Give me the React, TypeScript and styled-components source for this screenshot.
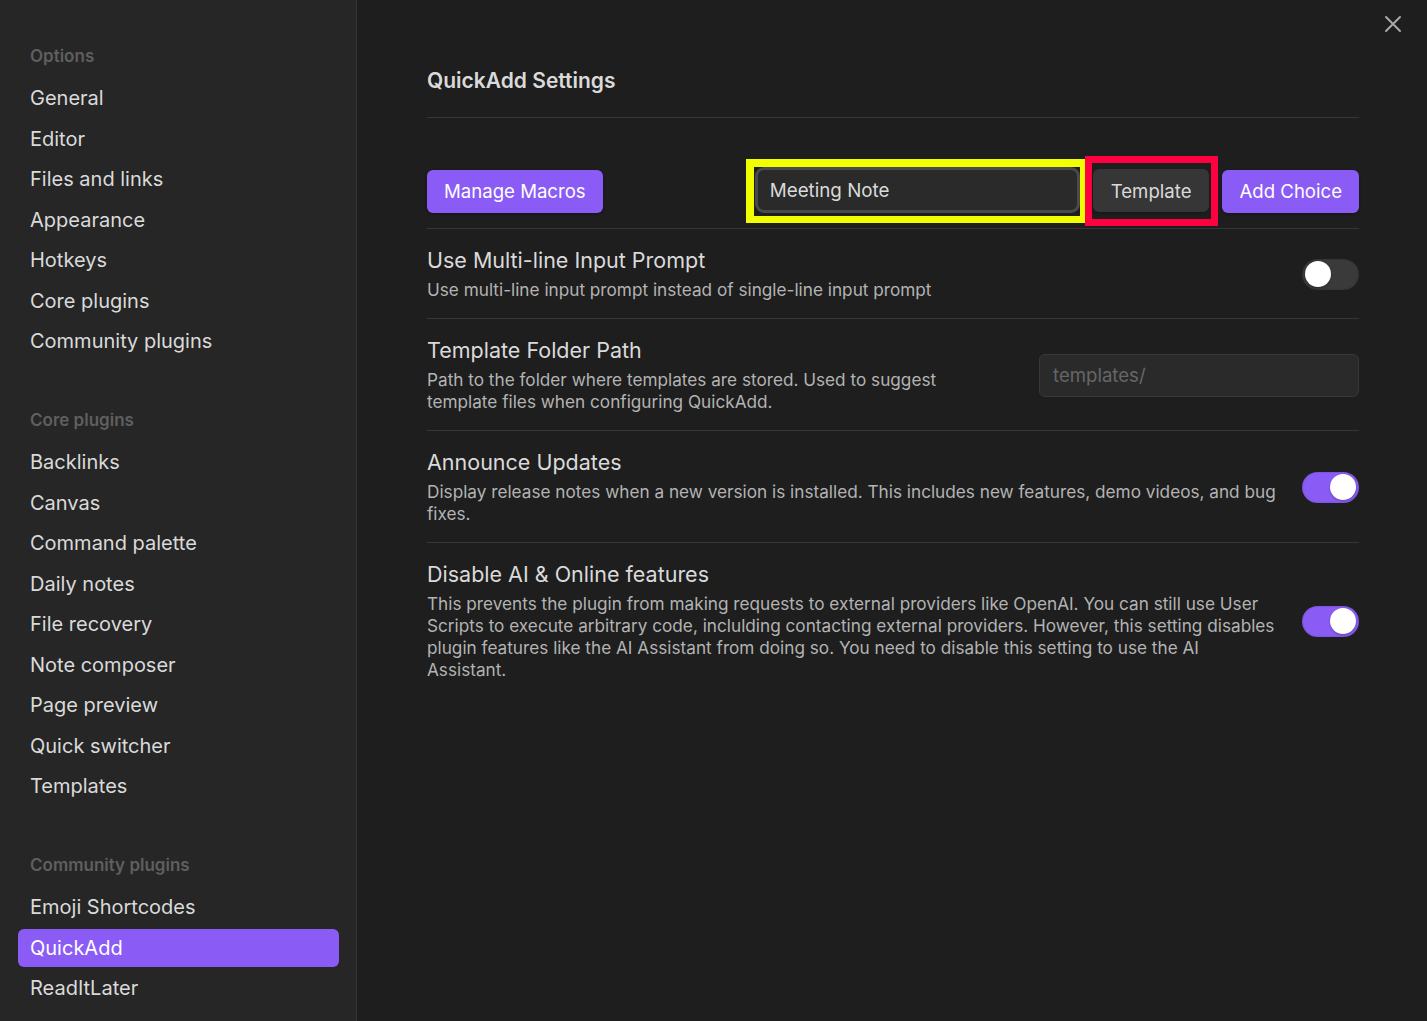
import React from "react";
import styled, { createGlobalStyle } from "styled-components";

const GlobalStyle = createGlobalStyle`
  html, body { margin: 0; padding: 0; background: #1e1e1e; }
  body { font-family: Inter, "Noto Sans", sans-serif; -webkit-font-smoothing: antialiased; }
  * { box-sizing: border-box; }
`;

const Window = styled.div`
  display: flex;
  width: 1427px;
  height: 1021px;
  position: relative;
  overflow: hidden;
  background: #1e1e1e;
`;

const Sidebar = styled.nav`
  width: 357px;
  flex: 0 0 357px;
  background: #262626;
  border-right: 1px solid #363636;
  padding: 45px 17px 0 18px;
  display: flex;
  flex-direction: column;
  gap: 49px;
`;

const NavGroup = styled.div`
  display: flex;
  flex-direction: column;
`;

const NavHeading = styled.div`
  font-size: 17px;
  line-height: 22px;
  font-weight: 600;
  color: #5f5f5f;
  padding-left: 12px;
  margin-bottom: 12px;
`;

const NavList = styled.div`
  display: flex;
  flex-direction: column;
  gap: 2.5px;
`;

const NavItem = styled.div<{ $active?: boolean }>`
  height: 38px;
  display: flex;
  align-items: center;
  padding-left: 12px;
  border-radius: 6px;
  font-size: 20px;
  color: ${(p) => (p.$active ? "#ffffff" : "#dadada")};
  background: ${(p) => (p.$active ? "#8a5cf5" : "transparent")};
`;

const Main = styled.main`
  flex: 1;
  padding: 67px 68px 0 70px;
  display: flex;
  flex-direction: column;
`;

const Title = styled.h2`
  margin: 0;
  font-size: 21px;
  line-height: 28px;
  font-weight: 600;
  color: #dadada;
  padding-bottom: 22px;
  border-bottom: 1px solid #363636;
`;

const ButtonRow = styled.div`
  display: flex;
  align-items: center;
  justify-content: space-between;
  padding: 38px 0 2px;
  border-bottom: 1px solid #363636;
`;

const RightGroup = styled.div`
  display: flex;
  align-items: center;
`;

const Button = styled.button<{ $variant?: "accent" | "plain" }>`
  height: 43px;
  padding: 0 ${(p) => (p.$variant === "plain" ? "18px" : "17px")};
  border: none;
  border-radius: 6px;
  font-family: Inter, "Noto Sans", sans-serif;
  font-size: 18.6px;
  color: ${(p) => (p.$variant === "plain" ? "#dadada" : "#ffffff")};
  background: ${(p) => (p.$variant === "plain" ? "#363636" : "#8a5cf5")};
  box-shadow: 0 1px 3px rgba(0, 0, 0, 0.35);
  cursor: pointer;
`;

const YellowMark = styled.div`
  border-style: solid;
  border-color: #f2ff00;
  border-width: 8px 5px 7px 8px;
  padding: 0 0 3px 1px;
  display: flex;
`;

const RedMark = styled.div`
  border: 7px solid #ff0040;
  padding: 6px 2px 7px 1px;
  margin-right: 4px;
  display: flex;
`;

const NameInput = styled.div`
  width: 325px;
  height: 46px;
  border: 3px solid #4a4a4a;
  border-radius: 9px;
  background: #2a2a2a;
  display: flex;
  align-items: center;
  padding-left: 12px;
  font-size: 18.8px;
  color: #dadada;
`;

const SettingItem = styled.div<{ $last?: boolean }>`
  display: flex;
  align-items: center;
  gap: 24px;
  padding: 18px 0 17px;
  border-bottom: ${(p) => (p.$last ? "none" : "1px solid #363636")};
`;

const Info = styled.div`
  flex: 1 1 auto;
  display: flex;
  flex-direction: column;
  gap: 6px;
`;

const Name = styled.div`
  font-size: 21.5px;
  line-height: 26px;
  color: #dadada;
`;

const Desc = styled.div`
  font-size: 17.2px;
  line-height: 22px;
  color: #b3b3b3;
`;

const Control = styled.div<{ $wide?: boolean }>`
  flex: 0 0 ${(p) => (p.$wide ? "360px" : "auto")};
  display: flex;
  justify-content: flex-end;
  align-items: center;
`;

const TextField = styled.div`
  width: 320px;
  height: 43px;
  border: 1px solid #383838;
  border-radius: 6px;
  background: #2a2a2a;
  display: flex;
  align-items: center;
  padding-left: 13px;
  font-size: 18.6px;
  color: #666666;
`;

const ToggleTrack = styled.div<{ $on?: boolean }>`
  width: 57px;
  height: 31px;
  border-radius: 16px;
  background: ${(p) => (p.$on ? "#8a5cf5" : "#3a3a3a")};
  display: flex;
  align-items: center;
  justify-content: ${(p) => (p.$on ? "flex-end" : "flex-start")};
  padding: 0 3px;
  box-shadow: inset 0 0 2px rgba(0, 0, 0, 0.3);
`;

const ToggleKnob = styled.div`
  width: 26px;
  height: 26px;
  border-radius: 50%;
  background: #ffffff;
  box-shadow: 0 1px 2px rgba(0, 0, 0, 0.3);
`;

const CloseButton = styled.div`
  position: absolute;
  top: 14px;
  right: 24px;
  width: 20px;
  height: 20px;
  display: flex;
  align-items: center;
  justify-content: center;
  color: #a8a8a8;
`;

const Toggle = ({ on }: { on?: boolean }) => (
  <Control>
    <ToggleTrack $on={on}>
      <ToggleKnob />
    </ToggleTrack>
  </Control>
);

const groups: { title: string; items: string[] }[] = [
  {
    title: "Options",
    items: ["General", "Editor", "Files and links", "Appearance", "Hotkeys", "Core plugins", "Community plugins"],
  },
  {
    title: "Core plugins",
    items: [
      "Backlinks",
      "Canvas",
      "Command palette",
      "Daily notes",
      "File recovery",
      "Note composer",
      "Page preview",
      "Quick switcher",
      "Templates",
    ],
  },
  {
    title: "Community plugins",
    items: ["Emoji Shortcodes", "QuickAdd", "ReadItLater"],
  },
];

export default function App() {
  return (
    <>
      <GlobalStyle />
      <Window>
        <Sidebar>
          {groups.map((g) => (
            <NavGroup key={g.title}>
              <NavHeading>{g.title}</NavHeading>
              <NavList>
                {g.items.map((it) => (
                  <NavItem key={it} $active={g.title === "Community plugins" && it === "QuickAdd"}>
                    {it}
                  </NavItem>
                ))}
              </NavList>
            </NavGroup>
          ))}
        </Sidebar>
        <Main>
          <Title>QuickAdd Settings</Title>
          <ButtonRow>
            <Button>Manage Macros</Button>
            <RightGroup>
              <YellowMark>
                <NameInput>Meeting Note</NameInput>
              </YellowMark>
              <RedMark>
                <Button $variant="plain">Template</Button>
              </RedMark>
              <Button>Add Choice</Button>
            </RightGroup>
          </ButtonRow>
          <SettingItem>
            <Info>
              <Name>Use Multi-line Input Prompt</Name>
              <Desc>Use multi-line input prompt instead of single-line input prompt</Desc>
            </Info>
            <Toggle />
          </SettingItem>
          <SettingItem>
            <Info>
              <Name>Template Folder Path</Name>
              <Desc>Path to the folder where templates are stored. Used to suggest template files when configuring QuickAdd.</Desc>
            </Info>
            <Control $wide>
              <TextField>templates/</TextField>
            </Control>
          </SettingItem>
          <SettingItem>
            <Info>
              <Name>Announce Updates</Name>
              <Desc>
                Display release notes when a new version is installed. This includes new features, demo videos, and bug fixes.
              </Desc>
            </Info>
            <Toggle on />
          </SettingItem>
          <SettingItem $last>
            <Info>
              <Name>Disable AI &amp; Online features</Name>
              <Desc>
                This prevents the plugin from making requests to external providers like OpenAI. You can still use User
                Scripts to execute arbitrary code, inclulding contacting external providers. However, this setting disables
                plugin features like the AI Assistant from doing so. You need to disable this setting to use the AI
                Assistant.
              </Desc>
            </Info>
            <Toggle on />
          </SettingItem>
        </Main>
        <CloseButton>
          <svg width="18" height="18" viewBox="0 0 18 18" fill="none" stroke="currentColor" strokeWidth="2" strokeLinecap="round">
            <path d="M2 2 L16 16 M16 2 L2 16" />
          </svg>
        </CloseButton>
      </Window>
    </>
  );
}
